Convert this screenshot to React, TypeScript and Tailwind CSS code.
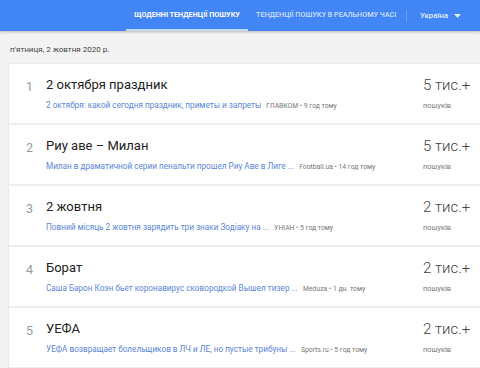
import React from "react";

const rows = [
  { n: 1, title: "2 октября праздник", snippet: "2 октября: какой сегодня праздник, приметы и запреты", src: "ГЛАВКОМ • 9 год тому", count: "5 тис.+" },
  { n: 2, title: "Риу аве – Милан", snippet: "Милан в драматичной серии пенальти прошел Риу Аве в Лиге ...", src: "Football.ua • 14 год тому", count: "5 тис.+" },
  { n: 3, title: "2 жовтня", snippet: "Повний місяць 2 жовтня зарядить три знаки Зодіаку на ...", src: "УНІАН • 5 год тому", count: "2 тис.+" },
  { n: 4, title: "Борат", snippet: "Саша Барон Коэн бьет коронавирус сковородкой Вышел тизер ...", src: "Meduza • 1 дн. тому", count: "2 тис.+" },
  { n: 5, title: "УЕФА", snippet: "УЕФА возвращает болельщиков в ЛЧ и ЛЕ, но пустые трибуны ...", src: "Sports.ru • 5 год тому", count: "2 тис.+" },
];

export default function App() {
  return (
    <div className="w-[480px] h-[368px] overflow-hidden bg-[#f3f3f3]" style={{ fontFamily: "Roboto, 'Noto Sans', sans-serif" }}>
      <div className="h-[31px] bg-[#4285f4] flex items-stretch shadow-[0_1px_3px_rgba(0,0,0,0.25)] relative z-10">
        <div className="w-[126px]" />
        <div className="w-[122px] flex items-center justify-center text-[7.2px] font-bold text-white border-b-[2px] border-[#c6dafc] pt-[2px]">
          ЩОДЕННІ ТЕНДЕНЦІЇ ПОШУКУ
        </div>
        <div className="pl-[8px] w-[158px] flex items-center text-[7.2px] font-medium text-[#d0e0fc]">
          ТЕНДЕНЦІЇ ПОШУКУ В РЕАЛЬНОМУ ЧАСІ
        </div>
        <div className="flex items-center">
          <div className="w-px h-[12px] bg-[#6a9ef6]" />
        </div>
        <div className="pl-[13px] flex items-center text-[7.8px] font-medium text-[#e3ecfd]">
          Україна
          <svg width="7" height="4" viewBox="0 0 7 4" className="ml-[6px]">
            <path d="M0 0 L7 0 L3.5 4 Z" fill="#e3ecfd" />
          </svg>
        </div>
      </div>
      <div className="h-[33px] flex items-center pl-[10px] text-[8px] text-[#444] pt-[5px]">
        п'ятниця, 2 жовтня 2020 р.
      </div>
      <div className="ml-[9px] bg-white shadow-[0_0_2px_rgba(0,0,0,0.12)]">
        {rows.map((r) => (
          <div key={r.n} className="h-[61px] flex border-b-[2px] border-[#eeeeee]">
            <div className="w-[37px] pl-[17px] pt-[14px] text-[12.5px] text-[#9a9a9a]">{r.n}</div>
            <div className="flex-1 pt-[13px]">
              <div className="text-[13px] text-[#222] leading-[16px]">{r.title}</div>
              <div className="mt-[6px] flex items-baseline whitespace-nowrap">
                <span className="text-[8.2px] text-[#5b86d6]">{r.snippet}</span>
                <span className="ml-[5px] text-[6.8px] text-[#777]">{r.src}</span>
              </div>
            </div>
            <div className="w-[57px] pt-[12px]">
              <div className="text-[15px] text-[#444] font-light leading-[18px]">{r.count}</div>
              <div className="mt-[6px] text-[7.4px] text-[#777]">пошуків</div>
            </div>
          </div>
        ))}
      </div>
    </div>
  );
}
